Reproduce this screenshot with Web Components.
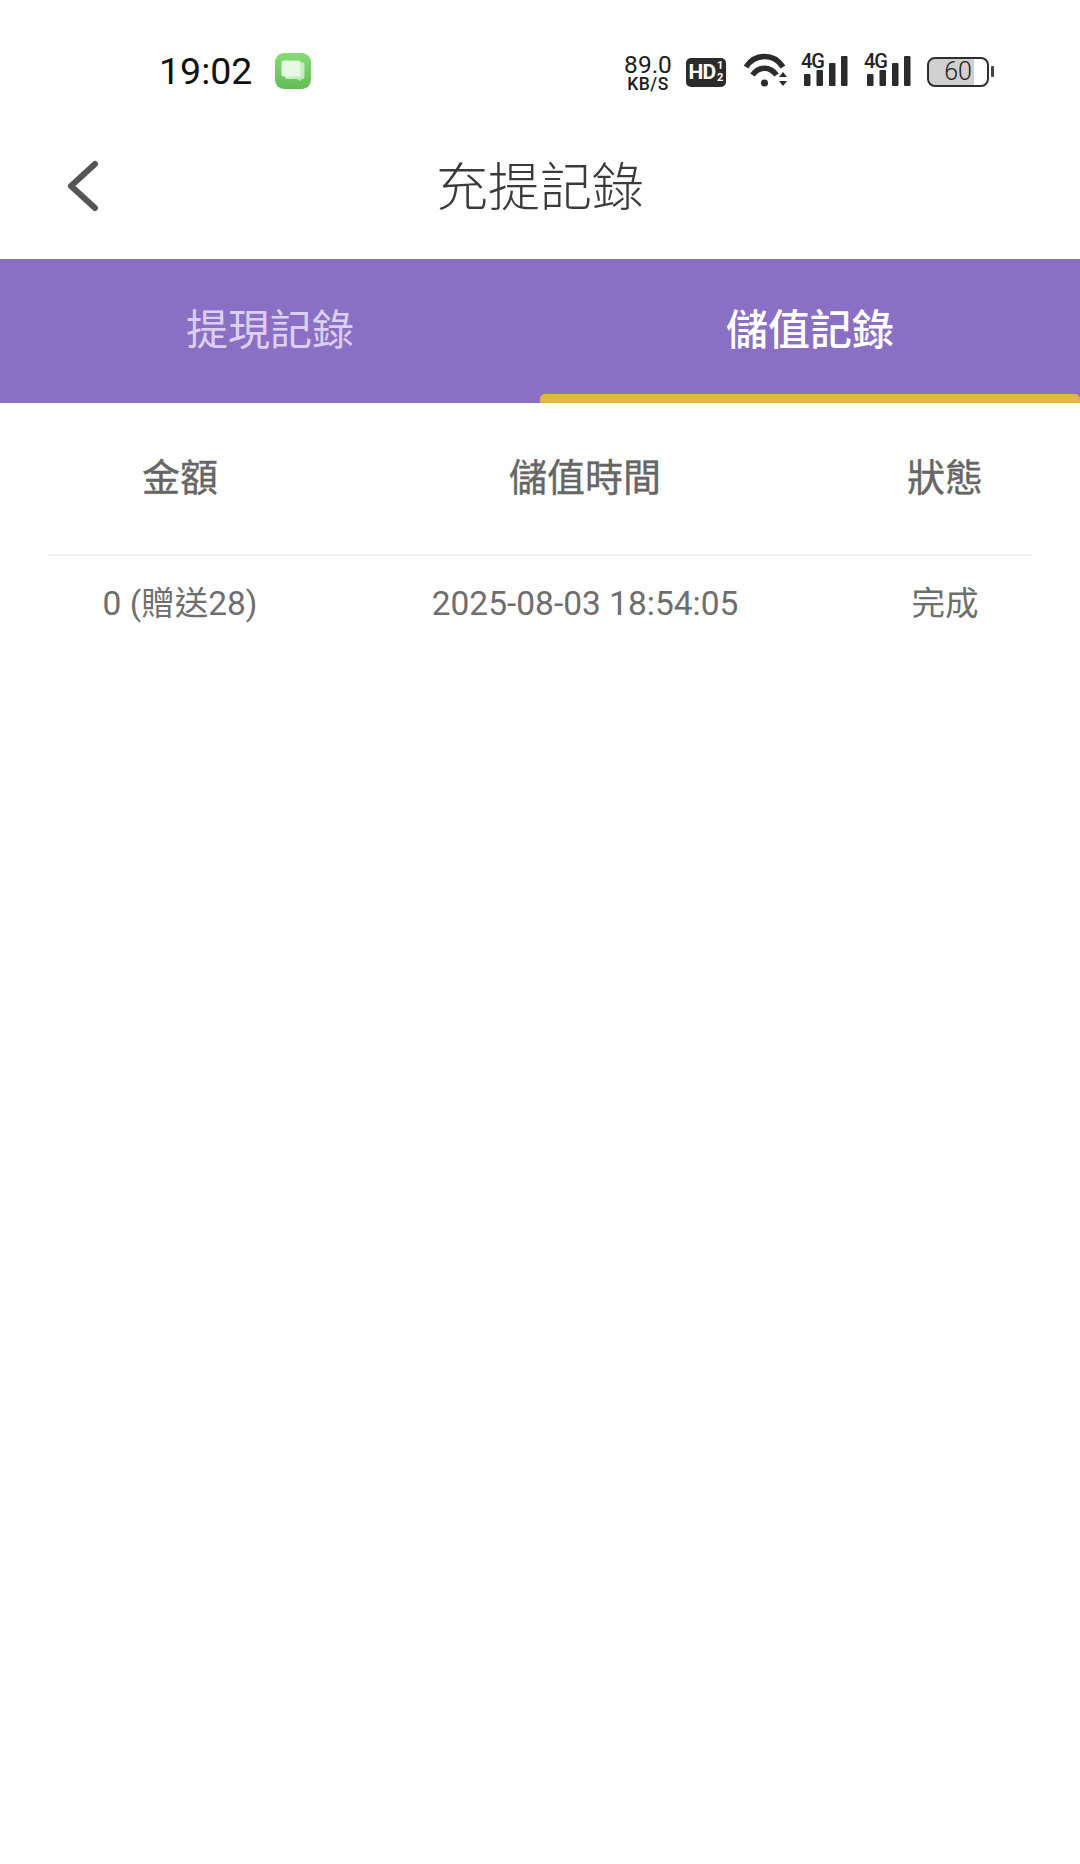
<!DOCTYPE html>
<html lang="zh-Hant">
<head>
<meta charset="utf-8">
<title>充提記錄</title>
<style>
  html, body { margin: 0; padding: 0; background: #fff; }
  body { width: 1080px; height: 1864px; overflow: hidden; font-family: Roboto, "Noto Sans CJK TC", sans-serif; }
</style>
</head>
<body>
<status-bar time="19:02"></status-bar>
<nav-header title="充提記錄"></nav-header>
<tab-bar>
  <tab-item>提現記錄</tab-item>
  <tab-item active>儲值記錄</tab-item>
</tab-bar>
<record-table>
  <record-row head><span>金額</span><span>儲值時間</span><span>狀態</span></record-row>
  <record-row><span>0 (贈送28)</span><span>2025-08-03 18:54:05</span><span>完成</span></record-row>
</record-table>

<script>
class StatusBar extends HTMLElement {
  constructor() {
    super();
    this.attachShadow({ mode: 'open' });
  }

  connectedCallback() {
    const time = this.getAttribute('time') || '';
    const signal = `
      <div class="signal">
        <span class="net">4G</span>
        <svg width="44" height="31" viewBox="0 0 44 31" fill="#2b2b2b">
          <rect x="0" y="19" width="6.500" height="12" rx="1"/>
          <rect x="12.500" y="15" width="6.500" height="16" rx="1"/>
          <rect x="25" y="8" width="6.500" height="23" rx="1"/>
          <rect x="37" y="1" width="6.500" height="30" rx="1"/>
        </svg>
      </div>`;

    this.shadowRoot.innerHTML = `
      <style>
        :host {
          display: flex;
          align-items: center;
          box-sizing: border-box;
          height: 112px;
          padding: 30px 86px 0 159px;
          color: #111;
          font-family: Roboto, sans-serif;
        }
        .time { font-size: 37.5px; line-height: 40px; }
        .msg { margin-left: 23px; width: 36px; height: 36px; }
        .spacer { flex: 1; }
        .speed { width: 50px; text-align: center; color: #1c1c1c; margin-top: 5px; }
        .speed div:first-child { font-size: 24.5px; line-height: 21px; }
        .speed div:last-child { font-size: 17.5px; line-height: 19px; font-weight: 500; letter-spacing: .5px; }
        .hd {
          margin-left: 13px;
          margin-top: 2px;
          width: 40px;
          height: 29px;
          border-radius: 5px;
          background: #2b2b2b;
          color: #fff;
          display: flex;
          align-items: center;
          justify-content: center;
          font-weight: 700;
          font-size: 21px;
          letter-spacing: -1px;
        }
        .hd small {
          display: flex;
          flex-direction: column;
          font-size: 11px;
          line-height: 12px;
          letter-spacing: 0;
          margin-left: 2px;
        }
        .wifi { margin-left: 18px; margin-top: -2px; display: block; overflow: visible; }
        .signal { position: relative; margin-left: 17px; width: 44px; height: 33px; }
        .signal svg { position: absolute; left: 0; top: 0; }
        .net {
          position: absolute;
          left: -3px;
          top: -3px;
          font-size: 20px;
          line-height: 18px;
          font-weight: 500;
          letter-spacing: -1px;
          color: #222;
        }
        .signal + .signal { margin-left: 19px; }
        .battery {
          margin-left: 16px;
          margin-top: 1px;
          box-sizing: border-box;
          width: 62px;
          height: 30px;
          border: 2.5px solid #2e2e2e;
          border-radius: 8px;
          display: flex;
          align-items: center;
          justify-content: center;
          background: linear-gradient(90deg, #d0d0d0 0 78%, #fff 78%);
          background-clip: padding-box;
          font-size: 25px;
          font-weight: 300;
          color: #222;
        }
        .nub { margin-left: 2px; margin-top: 1px; width: 3px; height: 11px; border-radius: 1px; background: #444; }
      </style>
      <span class="time">${time}</span>
      <svg class="msg" viewBox="0 0 36 36">
        <defs>
          <linearGradient id="g" x1="0" y1="0" x2="0" y2="1">
            <stop offset="0" stop-color="#86dc74"/>
            <stop offset="1" stop-color="#62bd56"/>
          </linearGradient>
        </defs>
        <rect width="36" height="36" rx="9" fill="url(#g)"/>
        <path d="M12 9h15a2.5 2.5 0 0 1 2.5 2.5V24a2 2 0 0 1-2 2h-1l-1 2-3.5-2H12z" fill="#c4ecbc"/>
        <path d="M8.5 7.5h15a2 2 0 0 1 2 2v12a2 2 0 0 1-2 2H15l-4 2.5-1-2.5H8.5a2 2 0 0 1-2-2v-12a2 2 0 0 1 2-2z" fill="#e6f7e2"/>
      </svg>
      <span class="spacer"></span>
      <div class="speed"><div>89.0</div><div>KB/S</div></div>
      <div class="hd">HD<small><span>1</span><span>2</span></small></div>
      <svg class="wifi" width="43" height="33" viewBox="0 0 43 33" fill="none" stroke="#2b2b2b" stroke-width="5.5">
        <path d="M2 13C11-1 30-1 39 13"/>
        <path d="M8.500 21C15 12 26 12 32.500 21"/>
        <circle cx="20.500" cy="29" r="3.500" fill="#2b2b2b" stroke="none"/>
        <path d="M35 23h8l-4-5zM35 27h8l-4 5z" fill="#2b2b2b" stroke="none"/>
      </svg>
      ${signal}
      ${signal}
      <div class="battery">60</div>
      <div class="nub"></div>
    `;
  }
}

class NavHeader extends HTMLElement {
  constructor() {
    super();
    this.attachShadow({ mode: 'open' });
  }

  connectedCallback() {
    const title = this.getAttribute('title') || '';

    this.shadowRoot.innerHTML = `
      <style>
        :host {
          display: grid;
          grid-template-columns: 1fr auto 1fr;
          align-items: center;
          height: 147px;
          font-family: Roboto, "Noto Sans CJK TC", sans-serif;
        }
        .back { margin-left: 64px; display: block; }
        h1 {
          margin: 0;
          padding-top: 7px;
          font-size: 52px;
          line-height: 60px;
          font-weight: 300;
          color: #3a3a3a;
        }
      </style>
      <svg class="back" width="38" height="58" viewBox="0 0 38 58" fill="none" stroke="#555" stroke-width="6" stroke-linecap="round" stroke-linejoin="round">
        <path d="M31 7L7 29l24 22"/>
      </svg>
      <h1>${title}</h1>
    `;
  }
}

class TabBar extends HTMLElement {
  constructor() {
    super();
    this.attachShadow({ mode: 'open' });
    this.shadowRoot.innerHTML = `
      <style>
        :host {
          display: grid;
          grid-template-columns: 1fr 1fr;
          box-sizing: border-box;
          height: 144px;
          border-top: 1px solid #85789f;
          background: #8a70c4;
        }
      </style>
      <slot></slot>
    `;
  }
}

class TabItem extends HTMLElement {
  constructor() {
    super();
    this.attachShadow({ mode: 'open' });
    this.shadowRoot.innerHTML = `
      <style>
        :host {
          position: relative;
          display: flex;
          align-items: center;
          justify-content: center;
          padding-bottom: 10px;
          font-size: 42px;
          font-weight: 400;
          color: #dccff2;
          font-family: Roboto, "Noto Sans CJK TC", sans-serif;
        }
        :host([active]) {
          color: #fff;
          font-weight: 500;
        }
        :host([active])::after {
          content: '';
          position: absolute;
          left: 0;
          right: 0;
          bottom: 0;
          height: 9px;
          border-radius: 5px 5px 0 0;
          background: #e0b746;
        }
      </style>
      <slot></slot>
    `;
  }
}

class RecordTable extends HTMLElement {
  constructor() {
    super();
    this.attachShadow({ mode: 'open' });
    this.shadowRoot.innerHTML = `
      <style>
        :host {
          display: block;
          padding: 0 48px;
          font-family: Roboto, "Noto Sans CJK TC", sans-serif;
        }
      </style>
      <slot></slot>
    `;
  }
}

class RecordRow extends HTMLElement {
  constructor() {
    super();
    this.attachShadow({ mode: 'open' });
    this.shadowRoot.innerHTML = `
      <style>
        :host {
          display: grid;
          grid-template-columns: 264px 546px 174px;
          align-items: center;
          justify-items: center;
          height: 96px;
          font-size: 33.5px;
          line-height: 44px;
          color: #6e6e6e;
        }
        :host([head]) {
          height: 153px;
          padding-bottom: 1px;
          border-bottom: 2px solid #f1f1f1;
          box-sizing: border-box;
          font-size: 38px;
          font-weight: 400;
          -webkit-text-stroke: .4px #666;
          color: #666;
        }
      </style>
      <slot></slot>
    `;
  }
}

customElements.define('status-bar', StatusBar);
customElements.define('nav-header', NavHeader);
customElements.define('tab-bar', TabBar);
customElements.define('tab-item', TabItem);
customElements.define('record-table', RecordTable);
customElements.define('record-row', RecordRow);
</script>
</body>
</html>
